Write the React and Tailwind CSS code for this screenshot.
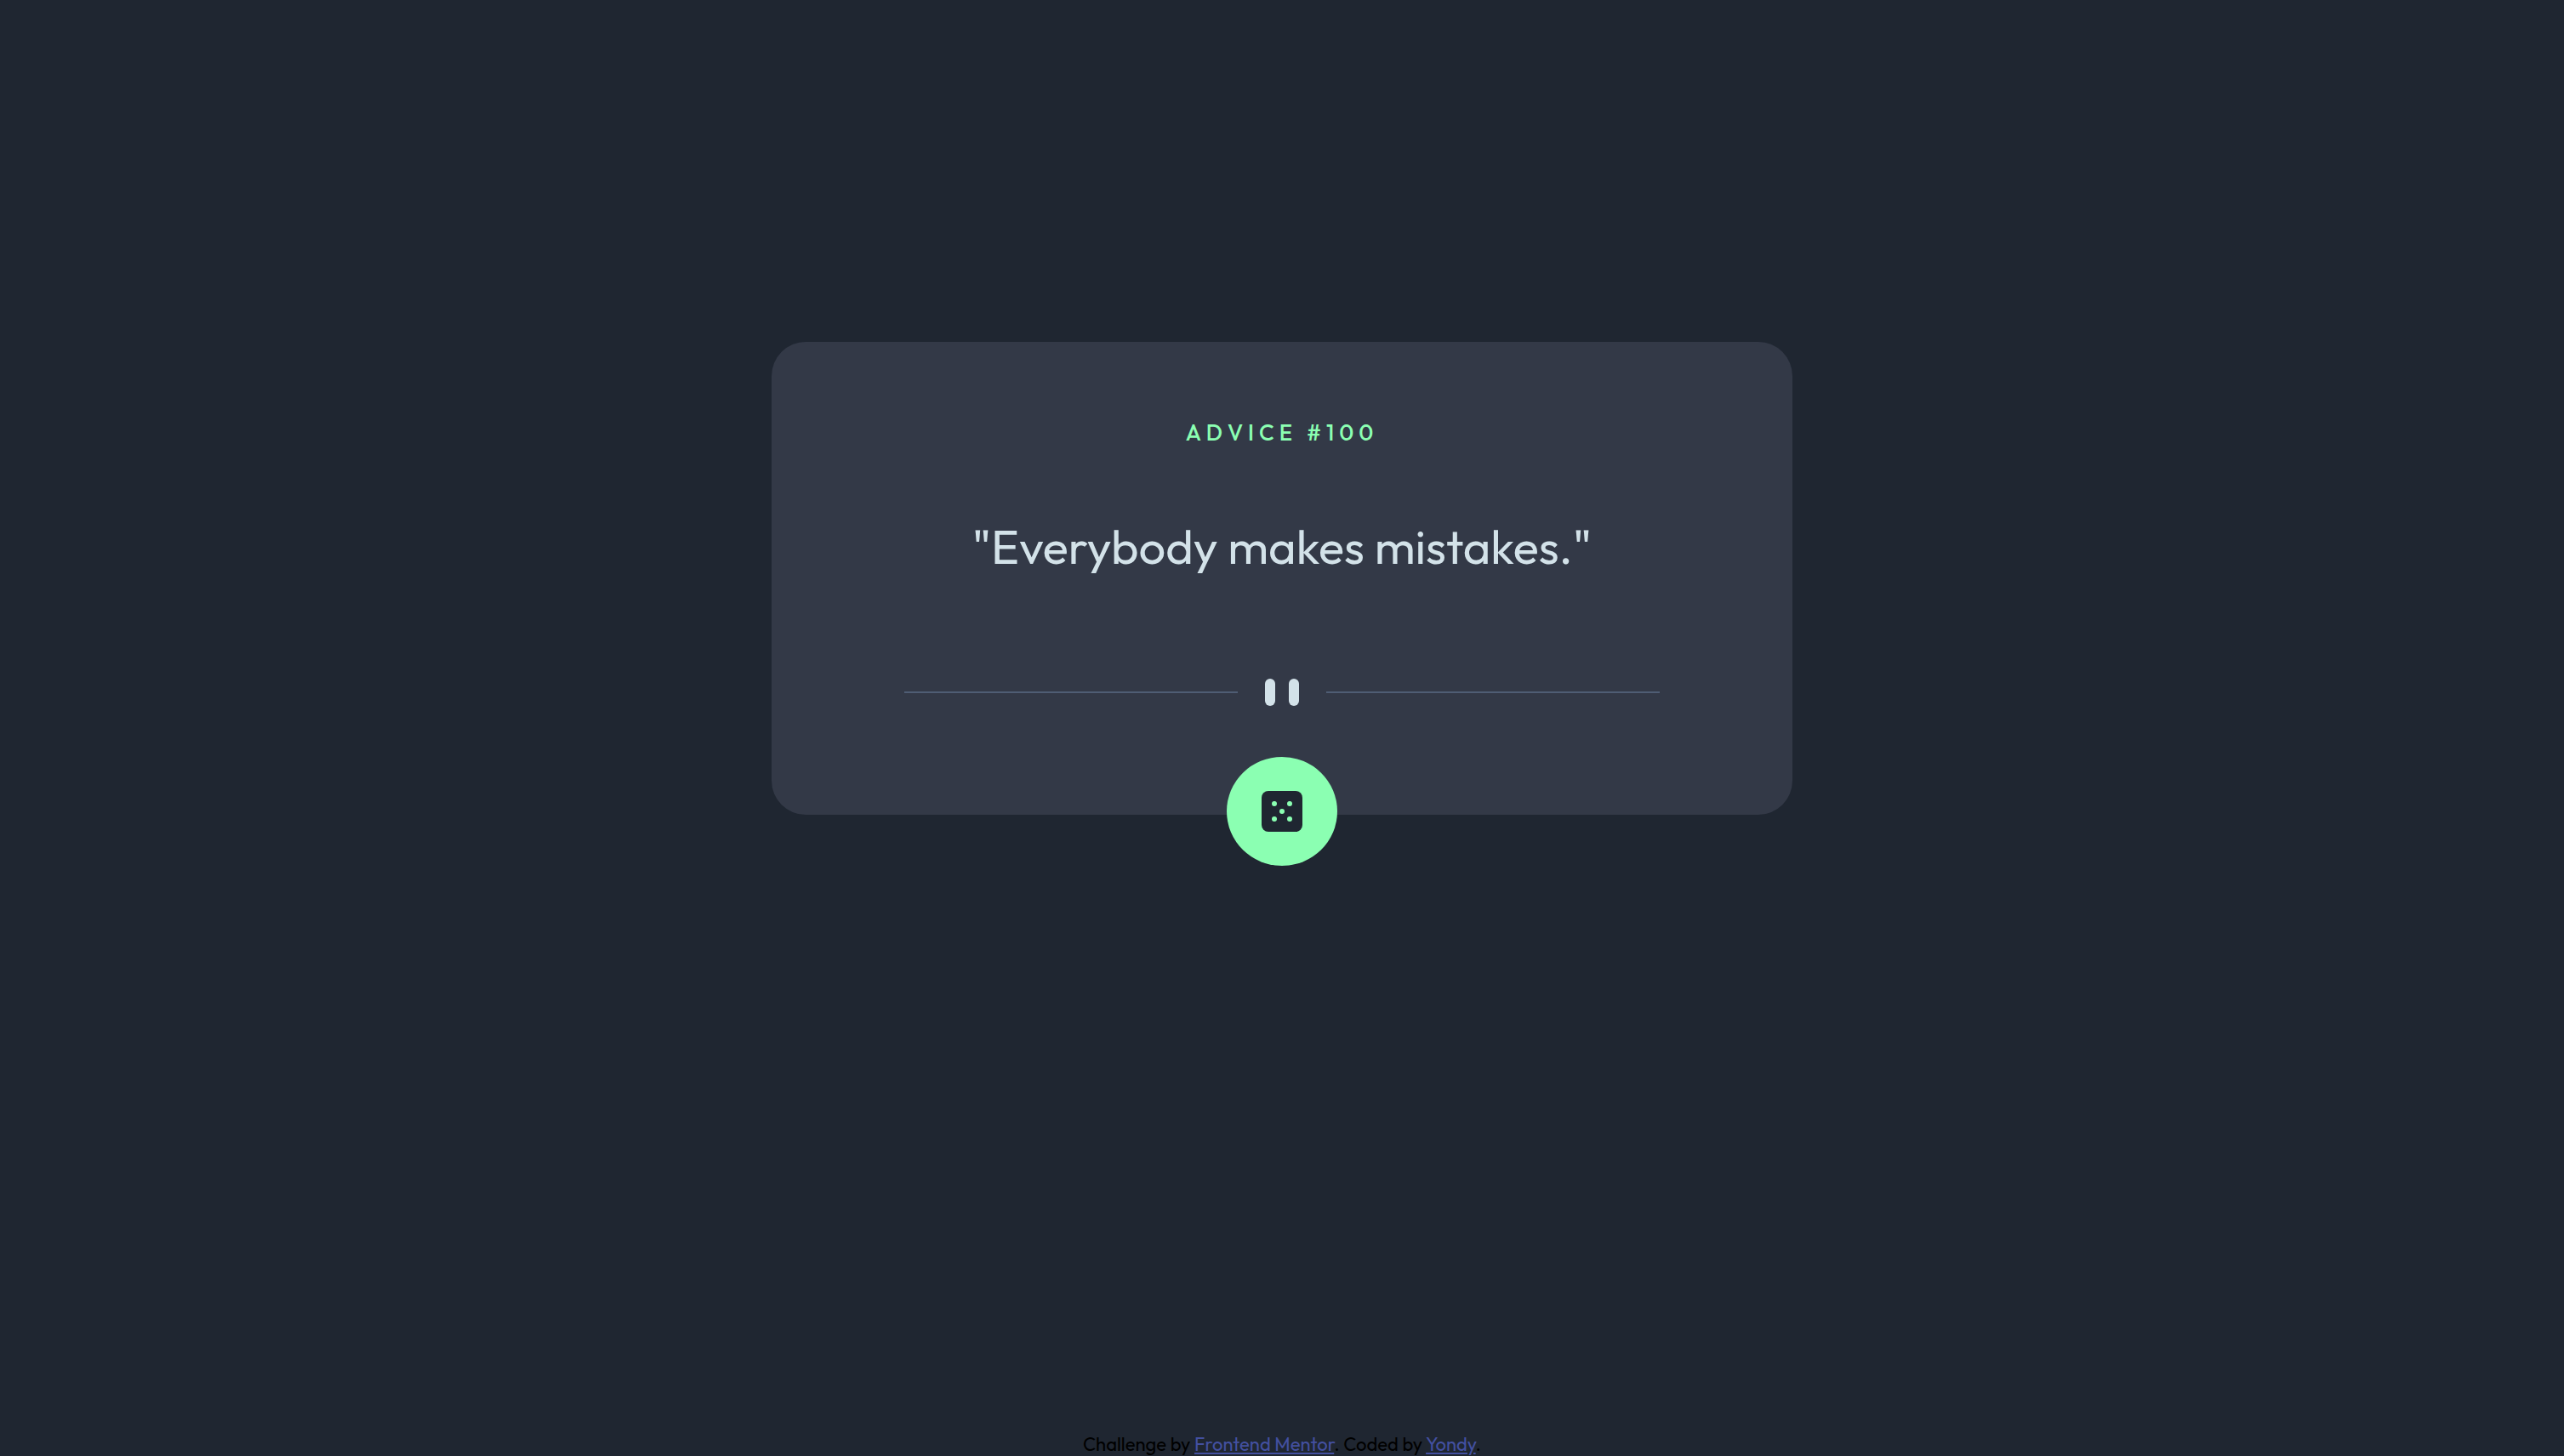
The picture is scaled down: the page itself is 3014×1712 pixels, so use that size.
function QuoteDivider() {
  return (
    <div className="flex w-full items-center gap-8" role="separator">
      <span className="h-0.5 flex-1 bg-[#4f5d74]" />
      <svg viewBox="0 0 40 32" className="h-8 w-10 fill-[#d3e2e9]" aria-hidden="true">
        <rect width="12" height="32" rx="6" />
        <rect x="28" width="12" height="32" rx="6" />
      </svg>
      <span className="h-0.5 flex-1 bg-[#4f5d74]" />
    </div>
  );
}

function DiceIcon() {
  return (
    <svg viewBox="0 0 48 48" className="size-12" aria-hidden="true">
      <rect width="48" height="48" rx="8" fill="#1f2631" />
      <g fill="#8bffb2">
        <circle cx="15" cy="15" r="3" />
        <circle cx="33" cy="15" r="3" />
        <circle cx="24" cy="24" r="3" />
        <circle cx="15" cy="33" r="3" />
        <circle cx="33" cy="33" r="3" />
      </g>
    </svg>
  );
}

export default function App() {
  return (
    <div className="flex min-h-screen flex-col items-center bg-[#1f2631] font-['Outfit','Lato',sans-serif]">
      <main className="flex w-full flex-1 flex-col items-center px-8 pt-[402px]">
        <section className="flex w-full max-w-[1200px] flex-col items-center rounded-[40px] bg-[#333947] px-[156px] pt-[91px]">
          <h1 className="text-[26px] leading-8 font-medium tracking-[6px] text-[#8bffb2]">ADVICE #100</h1>
          <p className="mt-[82px] text-center text-[56px] leading-[72px] text-[#d3e2e9]">
            "Everybody makes mistakes."
          </p>
          <div className="mt-[119px] w-full">
            <QuoteDivider />
          </div>
          <button
            type="button"
            aria-label="New advice"
            className="mt-[60px] -mb-[60px] flex h-32 w-[130px] cursor-pointer items-center justify-center rounded-[50%] bg-[#8bffb2]"
          >
            <DiceIcon />
          </button>
        </section>
      </main>
      <footer className="text-center text-[22px] leading-7 text-black">
        Challenge by{" "}
        <a href="https://www.frontendmentor.io" className="text-[#4350a0] underline">
          Frontend Mentor
        </a>
        . Coded by{" "}
        <a href="#" className="text-[#4350a0] underline">
          Yondy
        </a>
        .
      </footer>
    </div>
  );
}
